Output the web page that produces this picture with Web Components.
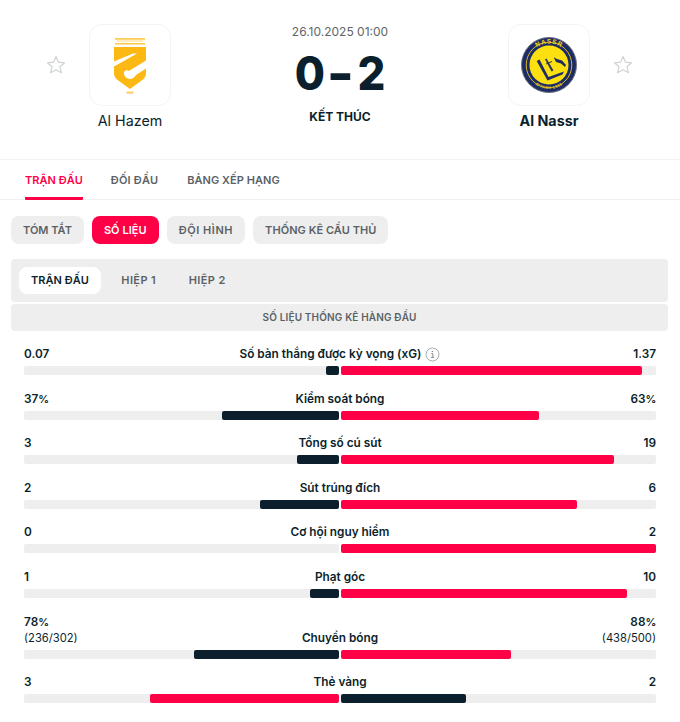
<!DOCTYPE html>
<html lang="vi">
<head>
<meta charset="utf-8">
<title>Al Hazem - Al Nassr</title>
<style>
  html, body { margin: 0; background: #fff; }
  body { font-family: Inter, "Noto Sans", sans-serif; color: #0c1f2c; width: 680px; height: 722px; overflow: hidden; }
</style>
</head>
<body>
<match-header></match-header>
<main-tabs></main-tabs>
<pill-tabs></pill-tabs>
<period-tabs></period-tabs>
<section-title>SỐ LIỆU THỐNG KÊ HÀNG ĐẦU</section-title>
<stats-list>
  <stat-row home="0.07" away="1.37" left="13" right="301" label="Số bàn thắng được kỳ vọng (xG)" info></stat-row>
  <stat-row home="37%" away="63%" left="117" right="198" label="Kiểm soát bóng"></stat-row>
  <stat-row home="3" away="19" left="42" right="273" label="Tổng số cú sút"></stat-row>
  <stat-row home="2" away="6" left="79" right="236" label="Sút trúng đích"></stat-row>
  <stat-row home="0" away="2" left="0" right="315" label="Cơ hội nguy hiểm"></stat-row>
  <stat-row home="1" away="10" left="29" right="286" label="Phạt góc"></stat-row>
  <stat-row home="78%" away="88%" home-sub="(236/302)" away-sub="(438/500)" left="145" right="170" label="Chuyền bóng"></stat-row>
  <stat-row home="3" away="2" left="189" right="125" label="Thẻ vàng" swap></stat-row>
</stats-list>

<script>
const STAR = `<svg width="20" height="20" viewBox="0 0 20 20"><path d="M10 1.6l2.5 5.6 6.1.6-4.6 4 1.4 6-5.4-3.1-5.4 3.1 1.4-6-4.6-4 6.1-.6z" fill="none" stroke="#cfd2d4" stroke-width="1.2" stroke-linejoin="round"/></svg>`;

const HAZEM = `<svg width="44" height="64" viewBox="0 0 44 64">
  <g fill="#fdb913">
    <rect x="7" y="5" width="30" height="1.8" opacity=".7"/>
    <rect x="9" y="7.400" width="26" height="1.200" opacity=".45"/>
    <rect x="7" y="10" width="30" height="1.600" opacity=".75"/>
    <path d="M6 14H38V40C38 44 36 46 33 48L22 56 11 48C8 46 6 44 6 40Z"/>
    <rect x="18.500" y="58.500" width="7" height="2.200" opacity=".65"/>
  </g>
  <path d="M6 28.500L25 20.500H29L6 33.500Z" fill="#fff"/>
  <path d="M38 27.500L21 38C19 36.500 16.500 37.500 16 39.500C15.500 42 18 46 22 46C25 46 26.500 44 28 42L38 35.500Z" fill="#fff"/>
</svg>`;

const NASSR = `<svg width="56" height="56" viewBox="0 0 56 56">
  <defs>
    <path id="topArc" d="M6.500 28A21.500 21.500 0 0 1 49.500 28"/>
    <path id="botArc" d="M4 28A24 24 0 0 0 52 28"/>
  </defs>
  <circle cx="28" cy="28" r="27.500" fill="#1d2c64" stroke="#6d7280" stroke-width="1"/>
  <circle cx="28" cy="28" r="22.800" fill="none" stroke="#e9c81a" stroke-width=".9"/>
  <circle cx="28" cy="28" r="19.500" fill="#fde010"/>
  <text font-family="Liberation Sans, sans-serif" font-size="6.500" font-weight="700" fill="#f4d31c" letter-spacing=".7" text-anchor="middle"><textPath href="#topArc" startOffset="50%">NASSR</textPath></text>
  <text font-family="Liberation Sans, sans-serif" font-size="3.800" font-weight="700" fill="#f4d31c" letter-spacing=".5" text-anchor="middle"><textPath href="#botArc" startOffset="50%">RIYADH 1955</textPath></text>
  <path d="M15.700 24L18.500 22.500 27.500 40 43 34.500 41.500 37.500 26.500 43.500Z" fill="#1d2c64"/>
  <path d="M24 22.300L25.500 21.500 32.500 33.500 30.500 34.500Z" fill="#2b3560"/>
  <path d="M25 27L31 24.500" stroke="#2b3560" stroke-width="1" fill="none"/>
  <path d="M32.700 20.300L36 22 41 23.500 45 28 44 30 40 26.500 35 25Z" fill="#1d2c64"/>
</svg>`;

class TeamBlock extends HTMLElement {
  constructor() {
    super();
    const right = this.hasAttribute("reverse");
    this.attachShadow({ mode: "open" }).innerHTML = `<style>
      :host { display: flex; align-items: flex-start; flex-direction: ${right ? "row-reverse" : "row"}; }
      .star { width: 20px; height: 20px; margin-top: 31px; display: flex; }
      .col { width: 128px; display: flex; flex-direction: column; align-items: center; }
      .logo { width: 82px; height: 82px; box-sizing: border-box; border: 1px solid #f4f4f4; border-radius: 13px; display: flex; align-items: center; justify-content: center; background: #fff; }
      .name { margin-top: 5px; font-size: 14.300px; line-height: 20px; font-weight: ${this.hasAttribute("winner") ? 700 : 400}; white-space: nowrap; }
    </style>
    <div class="star">${STAR}</div>
    <div class="col"><div class="logo"><slot></slot></div><div class="name">${this.getAttribute("name")}</div></div>`;
  }
}
customElements.define("team-block", TeamBlock);

class MatchHeader extends HTMLElement {
  constructor() {
    super();
    this.attachShadow({ mode: "open" }).innerHTML = `<style>
      :host { display: flex; box-sizing: border-box; height: 160px; padding: 24px 47px 0 46px; justify-content: space-between; border-bottom: 1px solid #f2f2f2; }
      .mid { width: 140px; margin-left: 1px; display: flex; flex-direction: column; align-items: center; }
      .date { font-size: 12px; line-height: 16px; color: #5f6568; }
      .score { margin-top: 9px; display: flex; height: 48px; align-items: center; font-size: 46px; font-weight: 800; color: #0c1f2c; line-height: 48px; }
      .score span { display: block; width: 31px; text-align: center; transform: scaleX(.95); }
      .score .dash { transform: scaleX(1.250); font-weight: 900; }
      .status { margin-top: 12px; font-size: 12px; font-weight: 700; line-height: 16px; }
    </style>
    <team-block name="Al Hazem" id="h"></team-block>
    <div class="mid">
      <div class="date">26.10.2025 01:00</div>
      <div class="score"><span>0</span><span class="dash">-</span><span>2</span></div>
      <div class="status">KẾT THÚC</div>
    </div>
    <team-block name="Al Nassr" winner reverse id="a"></team-block>`;
    this.shadowRoot.getElementById("h").innerHTML = HAZEM;
    this.shadowRoot.getElementById("a").innerHTML = NASSR;
  }
}
customElements.define("match-header", MatchHeader);

class MainTabs extends HTMLElement {
  constructor() {
    super();
    this.attachShadow({ mode: "open" }).innerHTML = `<style>
      :host { display: flex; box-sizing: border-box; height: 40px; padding: 0 25px; gap: 28px; border-bottom: 1px solid #f0f0f0; font-size: 11px; font-weight: 600; letter-spacing: .05px; color: #5b6266; }
      div { height: 40px; box-sizing: border-box; padding-top: 12px; line-height: 16px; white-space: nowrap; }
      .on { color: #ff0046; border-bottom: 3px solid #ff0046; border-radius: 0 0 1px 1px; height: 40px; }
      .wide { letter-spacing: .2px; }
    </style>
    <div class="on">TRẬN ĐẤU</div><div class="wide">ĐỐI ĐẦU</div><div style="margin-left:1px">BẢNG XẾP HẠNG</div>`;
  }
}
customElements.define("main-tabs", MainTabs);

class PillTabs extends HTMLElement {
  constructor() {
    super();
    this.attachShadow({ mode: "open" }).innerHTML = `<style>
      :host { display: flex; padding: 16px 11px 15px; gap: 8px; font-size: 11px; font-weight: 600; letter-spacing: .05px; color: #5b6266; }
      div { height: 28px; line-height: 28px; padding: 0 12px; border-radius: 8px; background: #eeeeee; white-space: nowrap; }
      .on { background: #ff0046; color: #fff; }
    </style>
    <div style="letter-spacing:0">TÓM TẮT</div><div class="on">SỐ LIỆU</div><div style="letter-spacing:.55px">ĐỘI HÌNH</div><div>THỐNG KÊ CẦU THỦ</div>`;
  }
}
customElements.define("pill-tabs", PillTabs);

class PeriodTabs extends HTMLElement {
  constructor() {
    super();
    this.attachShadow({ mode: "open" }).innerHTML = `<style>
      :host { display: flex; box-sizing: border-box; height: 43px; margin: 0 12px 0 11px; padding: 8px; background: #eeeeee; border-radius: 4px; font-size: 11px; font-weight: 600; letter-spacing: .05px; color: #5b6266; }
      div { height: 27px; line-height: 27px; padding: 0 12px; margin-right: 8.500px; border-radius: 8px; white-space: nowrap; }
      .on { background: #fff; color: #0c1f2c; }
      .wide { letter-spacing: .4px; }
    </style>
    <div class="on">TRẬN ĐẤU</div><div class="wide">HIỆP 1</div><div class="wide">HIỆP 2</div>`;
  }
}
customElements.define("period-tabs", PeriodTabs);

class SectionTitle extends HTMLElement {
  constructor() {
    super();
    this.attachShadow({ mode: "open" }).innerHTML = `<style>
      :host { display: block; box-sizing: border-box; height: 27px; margin: 2px 12px 0 11px; background: #eeeeee; border-radius: 4px; text-align: center; font-size: 10px; font-weight: 600; letter-spacing: .16px; line-height: 27px; color: #5b6266; }
    </style><slot></slot>`;
  }
}
customElements.define("section-title", SectionTitle);

class StatsList extends HTMLElement {
  constructor() {
    super();
    this.attachShadow({ mode: "open" }).innerHTML = `<style>
      :host { display: flex; flex-direction: column; gap: 15.600px; padding: 15px 24px 0; }
    </style><slot></slot>`;
  }
}
customElements.define("stats-list", StatsList);

class StatRow extends HTMLElement {
  constructor() {
    super();
    const a = (n) => this.getAttribute(n);
    const sub = (v) => (v ? `<em>${v}</em>` : "");
    const val = (v) => v.replace("%", "<small>%</small>");
    const info = this.hasAttribute("info")
      ? `<svg width="15" height="15" viewBox="0 0 15 15"><circle cx="7.500" cy="7.500" r="6.500" fill="none" stroke="#a9adb0" stroke-width="1"/><path d="M6.300 6.600h1.500v3.700M6 10.400h3.200" fill="none" stroke="#8d9194" stroke-width="1"/><circle cx="7.500" cy="4.500" r=".8" fill="#8d9194"/></svg>`
      : "";
    const leftColor = this.hasAttribute("swap") ? "#ff0046" : "#0c1f2c";
    const rightColor = this.hasAttribute("swap") ? "#0c1f2c" : "#ff0046";
    this.attachShadow({ mode: "open" }).innerHTML = `<style>
      :host { display: block; }
      .top { display: flex; justify-content: space-between; align-items: flex-end; font-size: 11.800px; line-height: 16px; font-weight: 600; }
      .v { display: flex; flex-direction: column; width: 70px; }
      .v.r { align-items: flex-end; }
      .v span { display: block; height: 16px; }
      small { font-size: 10.800px; line-height: 0; letter-spacing: -.3px; }
      em { font-style: normal; font-weight: 400; font-size: 11.200px; height: 16px; }
      .label { display: flex; align-items: center; gap: 4px; white-space: nowrap; height: 16px; }
      .bars { display: flex; gap: 2px; margin-top: 4px; }
      .track { flex: 1; height: 9px; background: #eeeeee; border-radius: 2px; display: flex; }
      .track.l { justify-content: flex-end; }
      .fill { height: 9px; border-radius: 2px; }
    </style>
    <div class="top">
      <div class="v"><span>${val(a("home"))}</span>${sub(a("home-sub"))}</div>
      <div class="label">${a("label")}${info}</div>
      <div class="v r"><span>${val(a("away"))}</span>${sub(a("away-sub"))}</div>
    </div>
    <div class="bars">
      <div class="track l"><div class="fill" style="width:${a("left")}px;background:${leftColor}"></div></div>
      <div class="track"><div class="fill" style="width:${a("right")}px;background:${rightColor}"></div></div>
    </div>`;
  }
}
customElements.define("stat-row", StatRow);
</script>
</body>
</html>
